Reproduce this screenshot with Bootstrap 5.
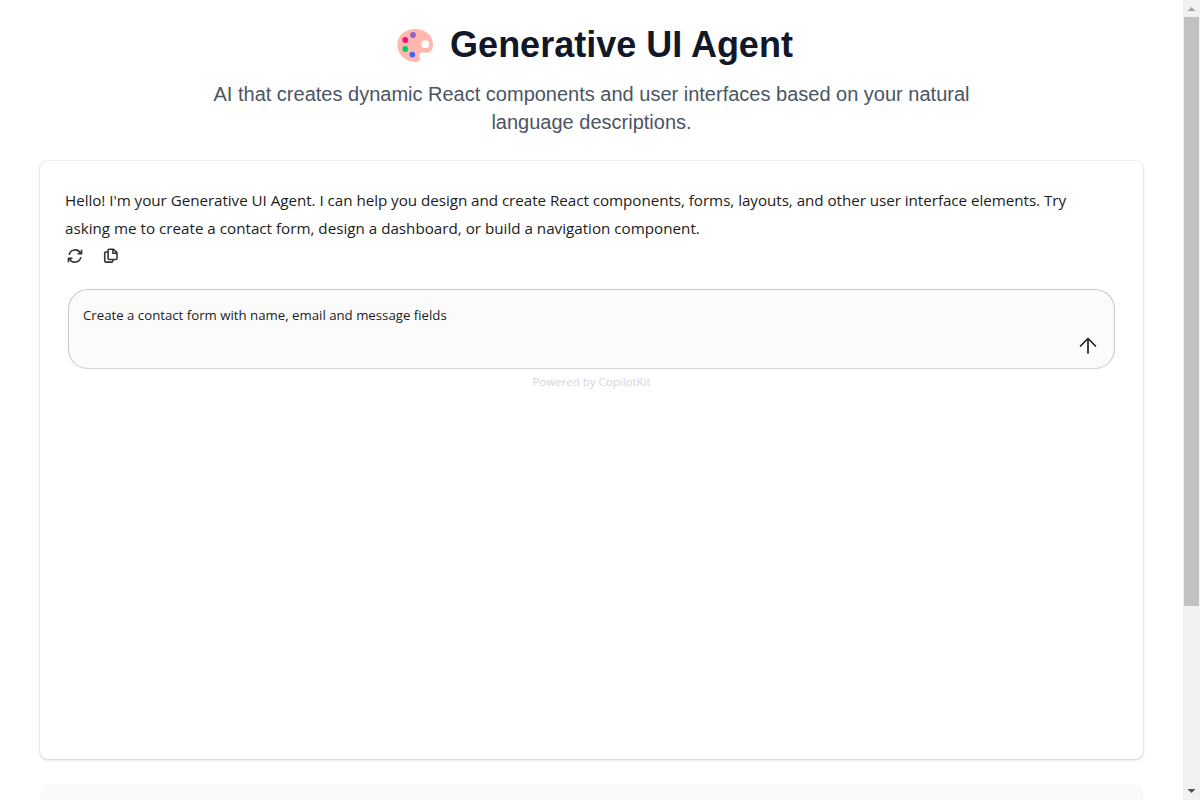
<!DOCTYPE html>
<html lang="en">
<head>
<meta charset="utf-8">
<meta name="viewport" content="width=device-width, initial-scale=1">
<title>Generative UI Agent</title>
<link href="https://cdn.jsdelivr.net/npm/bootstrap@5.3.0/dist/css/bootstrap.min.css" rel="stylesheet">
<script defer src="https://cdn.jsdelivr.net/npm/bootstrap@5.3.0/dist/js/bootstrap.bundle.min.js"></script>
<style>
body{font-family:"Liberation Sans",Arial,sans-serif;background:#fff}
.page-pane{padding:21px 40px 0;min-width:0}
.page-title{font-size:36px;line-height:48px;font-weight:700;color:#111827;gap:17px;margin-bottom:11px;padding-left:7px}
.page-title svg{width:36px;height:36px;margin-top:2px}
.page-intro{font-size:20px;line-height:28px;color:#4b5563;width:768px;margin-bottom:25px}
.chat-panel{height:598px;border-radius:8px;box-shadow:0 1px 3px rgba(0,0,0,.16),0 0 2px rgba(0,0,0,.14);padding:25px 28px 0 25px}
.chat-text{font-family:"Open Sans","Segoe UI",sans-serif;color:#1c1c1c}
.reply{font-size:15.2px;line-height:28px}
.reply span{display:block;white-space:nowrap}
.reply .l1{letter-spacing:-.04px}
.tools{gap:19px;padding:6px .5px 0;height:24px}
.prompt{margin:23px 0 0 3px;height:80px;border:1px solid #c8c8c8;border-bottom-color:#d4d4d4;border-radius:20px;background:#fbfbfb;padding:14px 14px 0;font-size:13.23px;line-height:22px}
.prompt svg{margin-top:8px}
.chat-text.powered{font-size:11.5px;line-height:16px;color:#d6d6d6;margin:5px 0 0 3px}
.next-panel{height:40px;margin-top:25px;border-radius:8px;background:#f9fafb}
.scroll-track{width:17px;background:#f1f1f1;padding:0 1px}
.scroll-thumb{height:589px;width:15px;background:#c1c1c1}
</style>
</head>
<body>
<div class="d-flex vh-100 overflow-hidden">
  <main class="page-pane flex-grow-1">
    <h1 class="page-title d-flex justify-content-center align-items-center">
      <svg viewBox="0 0 36 36" aria-hidden="true"><path fill="#ffb8ad" d="M18 1C8 1 .3 8 .3 16.500C.3 26 8 33.800 18 34C22 34 24 32 22.700 29C21.700 26 23.500 24 27 24.500C32 25.500 36 23 36 17C36 7 28 1 18 1Z"/><circle cx="28.300" cy="16.200" r="3.900" fill="#fff"/><circle cx="16" cy="7" r="2.900" fill="#9065c5"/><circle cx="8.300" cy="12" r="2.900" fill="#ff0b8d"/><circle cx="8.300" cy="21" r="2.900" fill="#00d166"/><circle cx="15.300" cy="26.600" r="2.900" fill="#4264fb"/></svg>
      <span>Generative UI Agent</span>
    </h1>
    <p class="page-intro mx-auto text-center">AI that creates dynamic React components and user interfaces based on your natural language descriptions.</p>
    <section class="chat-panel">
      <div class="reply chat-text"><span class="l1">Hello! I'm your Generative UI Agent. I can help you design and create React components, forms, layouts, and other user interface elements. Try</span><span>asking me to create a contact form, design a dashboard, or build a navigation component.</span></div>
      <div class="tools d-flex">
        <svg width="18" height="16" viewBox="0 0 24 22" fill="none" stroke="#333" stroke-width="2.200"><path d="M4 9.500A8.300 8.300 0 0 1 19.500 7M21 2.500V8H15.500M20 12.500A8.300 8.300 0 0 1 4.500 15M3 19.500V14H8.500"/></svg>
        <svg width="15" height="16" viewBox="1 1 22 23" fill="none" stroke="#333" stroke-width="2.300" stroke-linejoin="round"><path d="M10 2.500H16.500L21.500 7.500V16Q21.500 17.500 20 17.500H10Q8.500 17.500 8.500 16V4Q8.500 2.500 10 2.500ZM15.500 3V8.500H21M8.500 6.500H5Q3.500 6.500 3.500 8V20Q3.500 21.500 5 21.500H14Q15.500 21.500 15.500 20V18"/></svg>
      </div>
      <div class="prompt chat-text d-flex flex-column">
        <span>Create a contact form with name, email and message fields</span>
        <svg class="ms-auto" width="24" height="24" viewBox="0 0 24 24" fill="none" stroke="#222" stroke-width="1.700" stroke-linecap="round" stroke-linejoin="round"><path d="M12 19V4.500M4.500 12L12 4.500L19.500 12"/></svg>
      </div>
      <div class="powered chat-text text-center">Powered by CopilotKit</div>
    </section>
    <section class="next-panel"></section>
  </main>
  <aside class="scroll-track d-flex flex-column flex-shrink-0" aria-hidden="true">
    <svg width="15" height="17" viewBox="0 0 15 17"><path fill="#a3a3a3" d="M3.500 11H11.500L7.500 7Z"/></svg>
    <div class="scroll-thumb"></div>
    <svg class="mt-auto" width="15" height="17" viewBox="0 0 15 17"><path fill="#505050" d="M3.500 6H11.500L7.500 10Z"/></svg>
  </aside>
</div>
</body>
</html>
